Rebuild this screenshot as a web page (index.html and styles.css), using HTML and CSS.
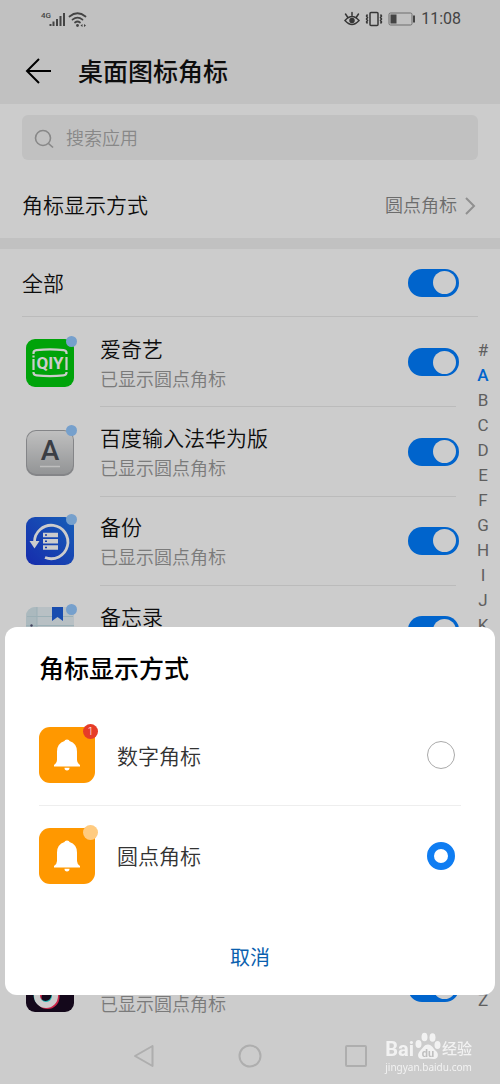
FILE: index.html
```html
<!DOCTYPE html>
<html lang="zh-CN">
  <head>
    <meta charset="UTF-8" />
    <meta name="viewport" content="width=device-width, initial-scale=1.0" />
    <title>桌面图标角标</title>
    <link rel="stylesheet" href="styles.css" />
  </head>
  <body>
    <div class="page">
      <header class="header">
        <div class="status-bar">
          <svg class="status-left" width="48" height="20" viewBox="0 0 48 20">
            <text x="1" y="9" font-size="8" font-weight="500" fill="#555">4G</text>
            <path d="M10.500 15.500v2M13.500 13v4.500M17 10.500v7M20.500 7.500v10M24 4.500v13" transform="translate(0 -.5)" stroke="#555" stroke-width="2" />
            <g fill="none" stroke="#555" stroke-width="1.700" stroke-linecap="round">
              <path d="M29.500 7.500q8-6.500 16 0" />
              <path d="M32.500 10.700q5-4 10 0" />
              <path d="M35 13.500q2.500-2 5 0" />
            </g>
            <circle cx="37.500" cy="16.500" r="1.400" fill="#555" />
            <path d="M42.500 15v3l-2-1.500zM44 15v3l2-1.500z" fill="#555" />
          </svg>
          <div class="status-right">
            <svg width="16" height="16" viewBox="0 0 16 16" fill="none" stroke="#444" stroke-width="1.500" stroke-linecap="round">
              <path d="M1 9.500q7-8 14 0q-7 8-14 0zM8 4.500V1.500M3.500 6L1.500 3M12.500 6l2-3" />
              <circle cx="8" cy="9.500" r="2" fill="#444" />
            </svg>
            <svg width="18" height="16" viewBox="0 0 18 16" fill="none" stroke="#444" stroke-width="1.500">
              <rect x="5" y="1.500" width="8" height="13" rx="1" />
              <path d="M2.500 3.500l-1 1.500 1 1.500-1 1.500 1 1.500-1 1.500 1 1.500M15.500 3.500l1 1.500-1 1.500 1 1.500-1 1.500 1 1.500-1 1.500" />
            </svg>
            <svg width="28" height="16" viewBox="0 0 28 16">
              <rect x="1" y="2" width="23" height="12" rx="1.500" fill="none" stroke="#888" />
              <rect x="2.500" y="3.500" width="6" height="9" fill="#555" />
              <path d="M26 4.500v7" stroke="#555" stroke-width="2" />
            </svg>
            <span class="clock">11:08</span>
          </div>
        </div>
        <div class="title-bar">
          <button class="back" aria-label="返回">
            <svg width="28" height="26" viewBox="0 0 28 26" fill="none" stroke="#000" stroke-width="2">
              <path d="M27 13H3M15 1L3 13l12 12" />
            </svg>
          </button>
          <h1>桌面图标角标</h1>
        </div>
      </header>

      <main class="content">
        <label class="search">
          <svg width="20" height="20" viewBox="0 0 20 20" fill="none" stroke="#aaa" stroke-width="1.600">
            <circle cx="9" cy="9" r="7.500" />
            <path d="M14.500 14.500L19 18.500" />
          </svg>
          <input type="text" placeholder="搜索应用" aria-label="搜索应用" />
        </label>

        <button class="mode-row">
          <span>角标显示方式</span>
          <span class="mode-value">圆点角标
            <svg width="11" height="18" viewBox="0 0 11 18" fill="none" stroke="#b5b5b5" stroke-width="2">
              <path d="M1 1l8 8-8 8" />
            </svg>
          </span>
        </button>

        <label class="all-row">
          <span>全部</span>
          <input class="switch" type="checkbox" checked />
        </label>

        <div class="apps">
          <ul class="app-list">
            <li class="app">
              <span class="icon dot">
                <svg width="48" height="48" viewBox="0 0 48 48">
                  <rect width="48" height="48" rx="9" fill="#00cc0d" />
                  <g fill="none" stroke="#fff" stroke-width="2.200">
                    <path d="M7.500 15v-1q0-2.500 3-2.800q13.500-1.500 27 0q3 .3 3 2.800v1M40.500 18v13" />
                    <path d="M7.500 20v11M7.500 16.500v2M7.500 33v.5q0 2.500 3 2.800q13.500 1.500 27 0q3-.3 3-2.800v-.5" />
                  </g>
                  <text x="24" y="30" text-anchor="middle" font-size="17" font-weight="700" fill="#fff">QIY</text>
                </svg>
              </span>
              <label class="app-body">
                <span class="app-text"><b>爱奇艺</b><small>已显示圆点角标</small></span>
                <input class="switch" type="checkbox" checked />
              </label>
            </li>
            <li class="app">
              <span class="icon dot">
                <svg width="48" height="48" viewBox="0 0 48 48">
                  <defs>
                    <linearGradient id="key" x2="0" y2="1">
                      <stop offset="0" stop-color="#f0f0f0" />
                      <stop offset="1" stop-color="#b8babc" />
                    </linearGradient>
                  </defs>
                  <rect y="2" width="48" height="46" rx="10" fill="#a5a7aa" />
                  <rect x="1" y="3" width="46" height="43" rx="9" fill="url(#key)" />
                  <text x="24" y="31.500" text-anchor="middle" font-size="28" font-weight="500" fill="#4a4e56">A</text>
                  <path d="M14 38.500h20" stroke="#eee" stroke-width="1.500" />
                </svg>
              </span>
              <label class="app-body">
                <span class="app-text"><b>百度输入法华为版</b><small>已显示圆点角标</small></span>
                <input class="switch" type="checkbox" checked />
              </label>
            </li>
            <li class="app">
              <span class="icon dot">
                <svg width="48" height="48" viewBox="0 0 48 48">
                  <defs>
                    <linearGradient id="backup" x1="1" x2="0" y2="1">
                      <stop offset="0" stop-color="#1d76e6" />
                      <stop offset="1" stop-color="#1c37d8" />
                    </linearGradient>
                  </defs>
                  <rect width="48" height="48" rx="9" fill="url(#backup)" />
                  <path d="M8.500 25a16.700 16.700 0 1 1 10.500 15.500" fill="none" stroke="#fff" stroke-width="2.800" />
                  <path d="M3.500 24h10l-5 7.500z" fill="#fff" />
                  <path d="M17 18h15M17 24.300h15M17 30.600h15" stroke="#fff" stroke-width="4.500" />
                  <path d="M19 18h2M19 24.300h2M19 30.600h2" stroke="#1c4fd8" stroke-width="1.500" />
                </svg>
              </span>
              <label class="app-body">
                <span class="app-text"><b>备份</b><small>已显示圆点角标</small></span>
                <input class="switch" type="checkbox" checked />
              </label>
            </li>
            <li class="app">
              <span class="icon dot">
                <svg width="48" height="48" viewBox="0 0 48 48">
                  <rect width="48" height="48" rx="9" fill="#e6f0f6" />
                  <path d="M0 9a9 9 0 0 1 9-9h2v48H9a9 9 0 0 1-9-9z" fill="#d6e8ee" />
                  <path d="M1 9.500h46M0 18.500h48M11 0v48" stroke="#c3dce4" />
                  <circle cx="5.500" cy="18.500" r="1.200" fill="#557" />
                  <path d="M26 0h11v14l-5.500-4L26 14z" fill="#1f5fdb" />
                </svg>
              </span>
              <label class="app-body">
                <span class="app-text"><b>备忘录</b><small>&nbsp;</small></span>
                <input class="switch" type="checkbox" checked />
              </label>
            </li>
            <li class="app"></li>
            <li class="app"></li>
            <li class="app"></li>
            <li class="app">
              <span class="icon dot">
                <svg width="48" height="48" viewBox="0 0 48 48">
                  <rect width="48" height="48" rx="9" fill="#190a22" />
                  <g fill="none" stroke-width="6">
                    <path d="M29 6v24a9 9 0 1 1-9-9" stroke="#ff2f5a" transform="translate(1.500 3)" />
                    <path d="M29 6v24a9 9 0 1 1-9-9" stroke="#25e5e0" transform="translate(-.5 1)" />
                    <path d="M29 6v24a9 9 0 1 1-9-9" stroke="#fff" transform="translate(0 2)" />
                  </g>
                </svg>
              </span>
              <label class="app-body">
                <span class="app-text"><b>抖音</b><small>已显示圆点角标</small></span>
                <input class="switch" type="checkbox" checked />
              </label>
            </li>
          </ul>
          <nav class="letters">
            <a href="#">#</a>
            <a href="#" class="active">A</a>
            <a href="#">B</a>
            <a href="#">C</a>
            <a href="#">D</a>
            <a href="#">E</a>
            <a href="#">F</a>
            <a href="#">G</a>
            <a href="#">H</a>
            <a href="#">I</a>
            <a href="#">J</a>
            <a href="#">K</a>
            <a href="#">L</a>
            <a href="#">M</a>
            <a href="#">N</a>
            <a href="#">O</a>
            <a href="#">P</a>
            <a href="#">Q</a>
            <a href="#">R</a>
            <a href="#">S</a>
            <a href="#">T</a>
            <a href="#">U</a>
            <a href="#">V</a>
            <a href="#">W</a>
            <a href="#">X</a>
            <a href="#">Y</a>
            <a href="#">Z</a>
          </nav>
        </div>
      </main>

      <footer class="nav-bar">
        <button aria-label="返回键">
          <svg width="24" height="24" viewBox="0 0 24 24"><path d="M20.500 2v20L3 12z" /></svg>
        </button>
        <button aria-label="主屏幕">
          <svg width="24" height="24" viewBox="0 0 24 24"><circle cx="12" cy="12" r="10.500" /></svg>
        </button>
        <button aria-label="最近任务">
          <svg width="24" height="24" viewBox="0 0 24 24"><rect x="2" y="2" width="20" height="20" rx="1" /></svg>
        </button>
      </footer>
    </div>

    <div class="scrim">
      <form class="dialog" role="dialog" aria-labelledby="dialog-title">
        <h2 id="dialog-title">角标显示方式</h2>
        <label class="option">
          <span class="bell">
            <svg width="56" height="56" viewBox="0 0 56 56">
              <rect width="56" height="56" rx="11" fill="#ff9800" />
              <path d="M15 39.500v-1.500q3-2 3-5V24.500q0-8 7.500-10.500q0-1.500 2.500-1.500t2.500 1.500q7.500 2.500 7.500 10.500V33q0 3 3 5v1.500zM25.500 40.800h5q0 2.700-2.500 2.700t-2.500-2.700z" fill="#fff" />
            </svg>
            <i class="count">1</i>
          </span>
          <span class="option-name">数字角标</span>
          <input type="radio" name="mode" />
        </label>
        <label class="option">
          <span class="bell">
            <svg width="56" height="56" viewBox="0 0 56 56">
              <rect width="56" height="56" rx="11" fill="#ff9800" />
              <path d="M15 39.500v-1.500q3-2 3-5V24.500q0-8 7.500-10.500q0-1.500 2.500-1.500t2.500 1.500q7.500 2.500 7.500 10.500V33q0 3 3 5v1.500zM25.500 40.800h5q0 2.700-2.500 2.700t-2.500-2.700z" fill="#fff" />
            </svg>
            <i class="count plain"></i>
          </span>
          <span class="option-name">圆点角标</span>
          <input type="radio" name="mode" checked />
        </label>
        <button type="button" class="cancel">取消</button>
      </form>
    </div>

    <div class="watermark">
      <div class="brand">
        <span class="bai">Bai</span>
        <svg width="26" height="28" viewBox="0 0 26 28">
          <g fill="#fff">
            <ellipse cx="3.500" cy="12" rx="3" ry="4" />
            <ellipse cx="9.500" cy="5" rx="3" ry="4.300" />
            <ellipse cx="17.500" cy="5.500" rx="3" ry="4.300" />
            <ellipse cx="22.500" cy="13" rx="3" ry="4" />
            <path d="M13 12.500c4 0 5 4 8 6.500s2.500 8-2 8q-6-1-12 0c-4.500 0-5-5-2-8s4-6.500 8-6.500z" />
          </g>
          <text x="13" y="24.500" text-anchor="middle" font-size="11" font-weight="700" fill="#bbb">du</text>
        </svg>
        <span class="jing">经验</span>
      </div>
      <div class="site">jingyan.baidu.com</div>
    </div>
  </body>
</html>
```
FILE: styles.css
```css
* {
  margin: 0;
  padding: 0;
  box-sizing: border-box;
}

body {
  font-family: Roboto, "Noto Sans CJK SC", sans-serif;
  font-size: 21px;
  line-height: 28px;
  color: #111;
  background-color: #fff;
}

button {
  font: inherit;
  color: inherit;
  border: none;
  background: none;
  cursor: pointer;
}

svg {
  display: block;
}

.page {
  min-height: 100vh;
  display: flex;
  flex-direction: column;
}

.header {
  background-color: #f2f2f2;
}

.status-bar {
  height: 38px;
  padding: 0 39px 0 40px;
  display: flex;
  justify-content: space-between;
  align-items: center;
}

.status-right {
  display: flex;
  align-items: center;
  gap: 5px;
}

.clock {
  font-size: 16px;
  color: #555;
}

.title-bar {
  height: 66px;
  padding: 0 24px;
  display: flex;
  align-items: center;
  gap: 26px;
}

h1,
h2 {
  padding-top: 4px;
  font-size: 25px;
  font-weight: 500;
  line-height: 36px;
}

.content {
  flex: 1;
  display: flex;
  flex-direction: column;
  font-weight: 350;
}

.search {
  height: 45px;
  margin: 11px 22px 0;
  padding: 2px 12px 0;
  display: flex;
  align-items: center;
  gap: 12px;
  border-radius: 6px;
  background-color: #f2f2f2;
}

.search input {
  flex: 1;
  min-width: 0;
  font: inherit;
  font-size: 18px;
  border: none;
  outline: none;
  background: none;
}

.search input::placeholder {
  color: #aaa;
}

.mode-row {
  height: 89px;
  padding: 14px 24px 0 22px;
  display: flex;
  justify-content: space-between;
  align-items: center;
  border-bottom: 11px solid #f2f2f2;
  text-align: left;
}

.mode-value {
  display: flex;
  align-items: center;
  gap: 8px;
  font-size: 18px;
  color: #888;
}

.all-row {
  height: 68px;
  margin: 0 22px;
  padding-right: 19px;
  display: flex;
  justify-content: space-between;
  align-items: center;
  border-bottom: 1px solid #eaeaea;
}

.all-row span {
  padding-top: 2px;
}

.switch {
  appearance: none;
  flex: none;
  width: 51px;
  height: 28px;
  padding: 2px 3px;
  display: flex;
  justify-content: flex-end;
  align-items: center;
  border-radius: 14px;
  background-color: #007dff;
}

.switch::before {
  content: "";
  width: 23px;
  height: 23px;
  border-radius: 50%;
  background-color: #fff;
}

.switch:not(:checked) {
  justify-content: flex-start;
  background-color: #ccc;
}

.apps {
  flex: 1;
  display: flex;
}

.app-list {
  flex: 1;
  padding: 1px 0 0 26px;
  display: flex;
  flex-direction: column;
  list-style: none;
}

.app {
  flex: 1;
  display: flex;
  align-items: center;
  gap: 26px;
}

.icon {
  position: relative;
}

.dot::after {
  content: "";
  position: absolute;
  top: -3px;
  right: -3px;
  width: 11px;
  height: 11px;
  border-radius: 50%;
  background-color: #94c8ff;
}

.app-body {
  flex: 1;
  align-self: stretch;
  display: flex;
  justify-content: space-between;
  align-items: center;
  border-bottom: 1px solid #eaeaea;
}

.app:last-child .app-body {
  border-bottom-color: transparent;
}

.app-body .switch {
  margin-right: -3px;
}

.app-text {
  padding-top: 5px;
  display: flex;
  flex-direction: column;
  line-height: 29px;
}

.app-text b {
  font-weight: inherit;
}

.app-text small {
  font-size: 18px;
  color: #999;
}

.letters {
  width: 34px;
  margin-left: 10px;
  padding-top: 21px;
  display: flex;
  flex-direction: column;
  align-items: center;
}

.letters a {
  font-size: 17px;
  font-weight: 400;
  line-height: 25px;
  color: #777;
  text-decoration: none;
}

.letters .active {
  font-weight: 500;
  color: #007dff;
}

.nav-bar {
  height: 51px;
  padding-bottom: 6px;
  display: flex;
  justify-content: center;
  align-items: center;
  gap: 82px;
}

.nav-bar svg {
  fill: none;
  stroke: #dadada;
  stroke-width: 2;
  stroke-linejoin: round;
}

.scrim {
  position: fixed;
  inset: 0;
  padding: 0 5px 89px;
  display: flex;
  align-items: flex-end;
  background-color: rgba(0, 0, 0, 0.2);
}

.dialog {
  flex: 1;
  padding: 21px 34px 19px;
  display: flex;
  flex-direction: column;
  border-radius: 12px;
  background-color: #fff;
}

.dialog h2 {
  margin-bottom: 17px;
  color: #000;
}

.option {
  height: 100px;
  padding-right: 6px;
  display: flex;
  align-items: center;
  gap: 22px;
  font-weight: 350;
  color: #333;
}

.option + .option {
  border-top: 1px solid #eee;
}

.option-name {
  flex: 1;
  padding-top: 3px;
}

.bell {
  position: relative;
}

.count {
  position: absolute;
  top: -3px;
  right: -3px;
  width: 15px;
  height: 15px;
  border-radius: 50%;
  font-size: 10px;
  font-style: normal;
  line-height: 15px;
  text-align: center;
  color: #fff;
  background-color: #e63c28;
}

.plain {
  background-color: #ffcb80;
}

.option input {
  appearance: none;
  width: 28px;
  height: 28px;
  border: 1px solid #aaa;
  border-radius: 50%;
}

.option input:checked {
  border: 7px solid #0f7df2;
}

.cancel {
  height: 36px;
  margin-top: 35px;
  font-size: 20px;
  color: #0a5fae;
}

.watermark {
  position: fixed;
  right: 28px;
  bottom: 10px;
  color: #fff;
  opacity: 0.75;
}

.brand {
  display: flex;
  align-items: flex-end;
  gap: 1px;
}

.bai {
  font-size: 20px;
  font-weight: 700;
  line-height: 22px;
}

.jing {
  font-size: 15px;
  font-weight: 500;
  line-height: 22px;
}

.site {
  font-family: "Noto Sans", sans-serif;
  font-size: 10px;
  line-height: 14px;
}
```
